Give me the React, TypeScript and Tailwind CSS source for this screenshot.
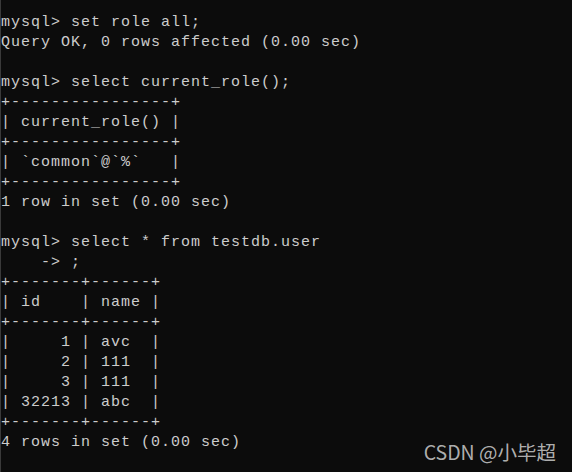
const lines = [
  "mysql> set role all;",
  "Query OK, 0 rows affected (0.00 sec)",
  "",
  "mysql> select current_role();",
  "+----------------+",
  "| current_role() |",
  "+----------------+",
  "| `common`@`%`   |",
  "+----------------+",
  "1 row in set (0.00 sec)",
  "",
  "mysql> select * from testdb.user",
  "    -> ;",
  "+-------+------+",
  "| id    | name |",
  "+-------+------+",
  "|     1 | avc  |",
  "|     2 | 111  |",
  "|     3 | 111  |",
  "| 32213 | abc  |",
  "+-------+------+",
  "4 rows in set (0.00 sec)",
];

export default function App() {
  return (
    <div className="relative w-[572px] h-[472px] overflow-hidden bg-[#0c0c0c] border-l border-[#3a3a3a]">
      {/* console output */}
      <pre className="pt-[13px] font-['Liberation_Mono',monospace] text-[15px] leading-[20px] tracking-[1px] text-[#cccccc] whitespace-pre">
        {lines.map((l, i) => (
          <div key={i} className="h-[20px]">
            {l}
          </div>
        ))}
      </pre>

      {/* watermark */}
      <div className="absolute right-[16px] top-[439px] font-['Noto_Sans_CJK_SC',sans-serif] text-[19.5px] leading-[26px] text-[#c4c4c4]/90">
        CSDN @小毕超
      </div>
    </div>
  );
}
